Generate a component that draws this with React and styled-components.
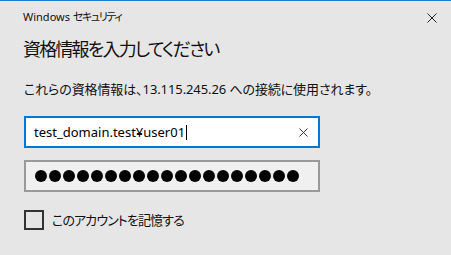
import React from "react";
import styled, { createGlobalStyle } from "styled-components";

const GlobalStyle = createGlobalStyle`
  html, body {
    margin: 0;
    padding: 0;
    background: #e6e6e6;
  }
  body {
    font-family: "Noto Sans", "Noto Sans CJK JP", sans-serif;
    color: #000;
  }
`;

const Dialog = styled.div`
  box-sizing: border-box;
  width: 451px;
  height: 255px;
  background: #e6e6e6;
  border-top: 1px solid #1a7fd4;
  display: flex;
  flex-direction: column;
  font-feature-settings: "palt";
`;

const TitleBar = styled.div`
  display: flex;
  align-items: center;
  justify-content: space-between;
  height: 32px;
  padding: 0 14px 0 23px;
`;

const TitleText = styled.div`
  font-family: "Noto Sans", "Noto Sans CJK JP", sans-serif;
  font-size: 11px;
  line-height: 16px;
  color: #111;
`;

const TitleKana = styled.span`
  letter-spacing: -1.4px;
`;

const CloseButton = styled.div`
  width: 10px;
  height: 10px;
  display: flex;
  margin-top: 1px;
`;

const Body = styled.div`
  display: flex;
  flex-direction: column;
  padding-left: 24px;
`;

const Heading = styled.div`
  font-family: "Noto Sans CJK JP", sans-serif;
  font-size: 18px;
  letter-spacing: -1.8px;
  line-height: 28px;
  margin-top: 1px;
  margin-left: -1px;
  color: #111;
`;

const Message = styled.div`
  font-family: "Noto Sans", "Noto Sans CJK JP", sans-serif;
  font-size: 13px;
  letter-spacing: -0.1px;
  line-height: 20px;
  margin-top: 17px;
  color: #111;
`;

const Field = styled.div`
  box-sizing: border-box;
  width: 296px;
  height: 32px;
  display: flex;
  align-items: center;
  padding: 0 8px 0 8px;
  border: 2px solid ${(p) => (p.$focused ? "#0078d7" : "#999")};
  background: ${(p) => (p.$focused ? "#fff" : "#f0f0f0")};
  margin-top: ${(p) => p.$top}px;
`;

const FieldText = styled.span`
  font-family: "Noto Sans", sans-serif;
  font-size: 13px;
  line-height: 20px;
  color: #000;
  flex: 1;
  display: flex;
  align-items: center;
  white-space: nowrap;
`;

const Caret = styled.span`
  display: inline-block;
  width: 1px;
  height: 15px;
  background: #000;
  margin-left: 1px;
`;

const Dots = styled.div`
  display: flex;
  gap: 2px;
  padding-left: 1px;
`;

const Dot = styled.span`
  width: 12px;
  height: 12px;
  border-radius: 50%;
  background: #000;
`;

const ClearButton = styled.div`
  width: 9px;
  height: 9px;
  display: flex;
  margin-right: 2px;
`;

const CheckRow = styled.label`
  display: flex;
  align-items: center;
  gap: 8px;
  margin-top: 18px;
`;

const CheckBox = styled.span`
  box-sizing: border-box;
  width: 20px;
  height: 20px;
  border: 2px solid #333;
`;

const CheckLabel = styled.span`
  font-family: "Noto Sans CJK JP", sans-serif;
  font-size: 13px;
  letter-spacing: -0.9px;
  line-height: 20px;
  color: #111;
`;

const XIcon = ({ size, stroke }) => (
  <svg width={size} height={size} viewBox={`0 0 ${size} ${size}`}>
    <path
      d={`M0.5 0.5 L${size - 0.5} ${size - 0.5} M${size - 0.5} 0.5 L0.5 ${size - 0.5}`}
      stroke={stroke}
      strokeWidth="1"
      fill="none"
    />
  </svg>
);

export default function App() {
  return (
    <>
      <GlobalStyle />
      <Dialog>
        <TitleBar>
          <TitleText>
            Windows <TitleKana>セキュリティ</TitleKana>
          </TitleText>
          <CloseButton>
            <XIcon size={10} stroke="#222" />
          </CloseButton>
        </TitleBar>
        <Body>
          <Heading>資格情報を入力してください</Heading>
          <Message>これらの資格情報は、13.115.245.26 への接続に使用されます。</Message>
          <Field $focused $top={17}>
            <FieldText>
              test_domain.test¥user01
              <Caret />
            </FieldText>
            <ClearButton>
              <XIcon size={9} stroke="#333" />
            </ClearButton>
          </Field>
          <Field $top={12}>
            <Dots>
              {Array.from({ length: 19 }).map((_, i) => (
                <Dot key={i} />
              ))}
            </Dots>
          </Field>
          <CheckRow>
            <CheckBox />
            <CheckLabel>このアカウントを記憶する</CheckLabel>
          </CheckRow>
        </Body>
      </Dialog>
    </>
  );
}
